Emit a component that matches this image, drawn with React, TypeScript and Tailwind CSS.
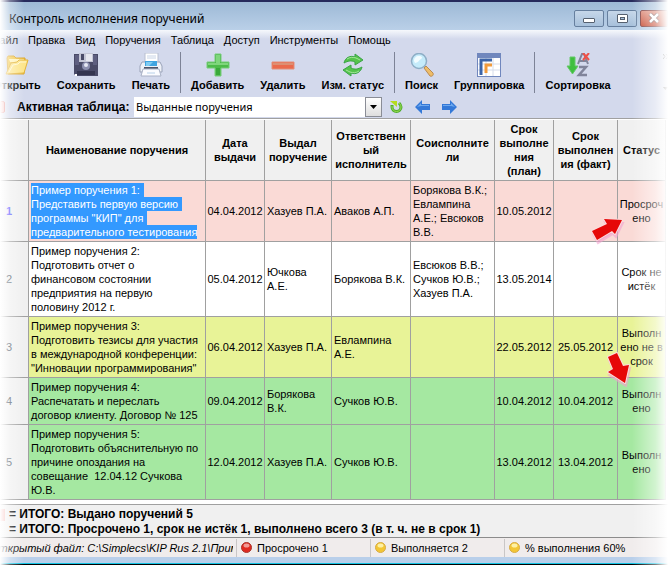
import React from 'react';

interface Task {
  id: number;
  name: string;
  issued: string;
  author: string;
  owner: string;
  helpers: string;
  plan: string;
  fact: string;
  status: string;
  rowClass: string;
}

const TASKS: Task[] = [
  {
    id: 1,
    name: 'Пример поручения 1:\nПредставить первую версию\nпрограммы "КИП" для\nпредварительного тестирования',
    issued: '04.04.2012',
    author: 'Хазуев П.А.',
    owner: 'Аваков А.П.',
    helpers: 'Борякова В.К.;\nЕвлампина\nА.Е.; Евсюков\nВ.В.',
    plan: '10.05.2012',
    fact: '',
    status: 'Просроч\nено',
    rowClass: 'h-[61px] bg-[#fadad6]',
  },
  {
    id: 2,
    name: 'Пример поручения 2:\nПодготовить отчет о\nфинансовом состоянии\nпредприятия на первую\nполовину 2012 г.',
    issued: '05.04.2012',
    author: 'Ючкова\nА.Е.',
    owner: 'Борякова В.К.',
    helpers: 'Евсюков В.В.;\nСучков Ю.В.;\nХазуев П.А.',
    plan: '13.05.2014',
    fact: '',
    status: 'Срок не\nистёк',
    rowClass: 'h-[75px] bg-white',
  },
  {
    id: 3,
    name: 'Пример поручения 3:\nПодготовить тезисы для участия\nв международной конференции:\n"Инновации программирования"',
    issued: '06.04.2012',
    author: 'Хазуев П.А.',
    owner: 'Евлампина\nА.Е.',
    helpers: '',
    plan: '22.05.2012',
    fact: '25.05.2012',
    status: 'Выполн\nено не в\nсрок',
    rowClass: 'h-[61px] bg-[#e8f397]',
  },
  {
    id: 4,
    name: 'Пример поручения 4:\nРаспечатать и переслать\nдоговор клиенту. Договор № 125',
    issued: '09.04.2012',
    author: 'Борякова\nВ.К.',
    owner: 'Сучков Ю.В.',
    helpers: '',
    plan: '10.04.2012',
    fact: '10.04.2012',
    status: 'Выполн\nено',
    rowClass: 'h-[47px] bg-[#a5e8a1]',
  },
  {
    id: 5,
    name: 'Пример поручения 5:\nПодготовить объяснительную по\nпричине опоздания на\nсовещание  12.04.12 Сучкова\nЮ.В.',
    issued: '12.04.2012',
    author: 'Хазуев П.А.',
    owner: 'Сучков Ю.В.',
    helpers: '',
    plan: '13.04.2012',
    fact: '13.04.2012',
    status: 'Выполн\nено',
    rowClass: 'h-[75px] bg-[#a5e8a1]',
  },
];

const COLUMNS = [
  { title: '', width: 'w-[29px]' },
  { title: 'Наименование поручения', width: '' },
  { title: 'Дата\nвыдачи', width: 'w-[59px]' },
  { title: 'Выдал\nпоручение', width: 'w-[67px]' },
  { title: 'Ответственн\nый\nисполнитель', width: 'w-[79px]' },
  { title: 'Соисполните\nли', width: 'w-[84px]' },
  { title: 'Срок\nвыполне\nния\n(план)', width: 'w-[59px]' },
  { title: 'Срок\nвыполнен\nия (факт)', width: 'w-[64px]' },
  { title: 'Статус', width: 'w-[48px]' },
];

const MENU = ['Файл', 'Правка', 'Вид', 'Поручения', 'Таблица', 'Доступ', 'Инструменты', 'Помощь'];

const FolderIcon = () => (
  <svg width="24" height="24" viewBox="0 0 24 24">
    <path d="M2 5l1-2h6l2 2h9v4l-1 12H3z" fill="#f3c94c" stroke="#dba62c" />
    <path d="M4 6h15v3H5z" fill="#fff3b8" />
    <path d="M1 21l5-11 6-1 2-2h9l-4 13z" fill="#fde58a" stroke="#e3b33a" />
    <path d="M4 19l4-7 5-1 2-2h6" fill="none" stroke="#fff6cf" />
  </svg>
);

const SaveIcon = () => (
  <svg width="24" height="24" viewBox="0 0 24 24">
    <path d="M0 1h24v22H2l-2-2z" fill="#4a4b68" />
    <path d="M1 2h4v10H1zM19 2h4v10h-4z" fill="#5e5f80" />
    <path d="M5 0h14v9H5z" fill="#c4c6d6" />
    <path d="M7 1h3v6H7z" fill="#4a4b68" />
    <path d="M12 1h6v7h-6z" fill="#e6e7ef" />
    <circle cx="12" cy="13" r="4" fill="#8d90b0" />
    <circle cx="12" cy="12" r="2" fill="#e6e8f4" />
    <path d="M3 18h18v4H3z" fill="#34354f" />
    <path d="M1 21h2v2H1z" fill="#fff" />
  </svg>
);

const PrintIcon = () => (
  <svg width="24" height="24" viewBox="0 0 24 24">
    <path d="M6 0h13v11H6z" fill="#fff" stroke="#b8bfd0" />
    <path d="M8 3h9M8 5h9" stroke="#c8d4e6" />
    <path d="M3 9h18l2 4v6H1v-6z" fill="#eef1f7" stroke="#9aa3b8" />
    <path d="M6 8h12v5H6z" fill="#3fa4e0" />
    <path d="M7 9h7l-4 4H7z" fill="#7fcbf2" />
    <path d="M5 14h14v2H5z" fill="#4c5468" />
    <path d="M4 16h16l2 7H2z" fill="#fbfcff" stroke="#aab2c6" />
    <path d="M8 20h8" stroke="#b7d0e8" />
  </svg>
);

const PlusIcon = () => (
  <svg width="24" height="24" viewBox="0 0 24 24">
    <path d="M9 1h6v8h8v6h-8v8H9v-8H1V9h8z" fill="#4dbb4a" stroke="#77cc78" />
    <path d="M10 2h4v8h8v2H2v-2h8z" fill="#7fd67c" />
    <path d="M10 15h4v7h-4z" fill="#39a93a" />
  </svg>
);

const MinusIcon = () => (
  <svg width="24" height="24" viewBox="0 0 24 24">
    <path d="M1 9h22v7H1z" fill="#ea6a4c" stroke="#e28f78" />
    <path d="M2 10h20v2H2z" fill="#dd8f72" />
  </svg>
);

const CycleIcon = () => (
  <svg width="24" height="24" viewBox="0 0 24 24" fill="#55c44c" stroke="#39a447">
    <path d="M3 10c1-5 6-8 11-6V1l8 6-8 5V9c-4-2-7-1-11 1z" />
    <path d="M21 14c-1 5-6 8-11 6v3l-8-6 8-5v3c4 2 7 1 11-1z" />
    <path d="M6 6c3-2 6-2 9-1l4 2M18 18c-3 2-6 2-9 1l-4-2" fill="none" stroke="#a4e69a" />
  </svg>
);

const SearchIcon = () => (
  <svg width="24" height="24" viewBox="0 0 24 24">
    <path d="M14 15l2-2 7 7c1 2-1 4-3 3z" fill="#eebd68" stroke="#b98a52" />
    <circle cx="9" cy="8" r="7.5" fill="#c5ebfa" stroke="#8eaec6" strokeWidth="1.5" />
    <path d="M4 8c0-3 2-5 5-5s4 2 2 3-3 4-6 4z" fill="#f2fcff" />
  </svg>
);

const GroupIcon = () => (
  <svg width="24" height="24" viewBox="0 0 24 24">
    <path d="M0 0h24v24H0z" fill="#7087bd" />
    <path d="M1 5h22v18H1z" fill="#fff" />
    <path d="M1 11h22M1 17h22M9 5v18M16 5v18" stroke="#d5dcea" />
    <path d="M4 22V7h11" fill="none" stroke="#3c64a8" strokeWidth="3" />
    <path d="M9 20v-8h6" fill="none" stroke="#f29b3c" strokeWidth="3" />
  </svg>
);

const SortIcon = () => (
  <svg width="24" height="24" viewBox="0 0 24 24">
    <path d="M4 4h5v9h3l-5.500 8L1 13h3z" fill="#3fbf3f" stroke="#64c968" />
    <path d="M12 11l4-10h2l4 10M14 8h6" fill="none" stroke="#80849a" strokeWidth="2" />
    <path d="M13 14h7l-7 8h8" fill="none" stroke="#80849a" strokeWidth="2.500" />
    <path d="M17 0l6 7M23 0l-6 7" stroke="#ee5148" strokeWidth="2" />
  </svg>
);

const TOOL_GROUPS = [
  [
    { label: 'Открыть', icon: <FolderIcon /> },
    { label: 'Сохранить', icon: <SaveIcon /> },
    { label: 'Печать', icon: <PrintIcon /> },
  ],
  [
    { label: 'Добавить', icon: <PlusIcon /> },
    { label: 'Удалить', icon: <MinusIcon /> },
    { label: 'Изм. статус', icon: <CycleIcon /> },
  ],
  [
    { label: 'Поиск', icon: <SearchIcon /> },
    { label: 'Группировка', icon: <GroupIcon /> },
  ],
  [{ label: 'Сортировка', icon: <SortIcon /> }],
];

const BlueArrow = ({ flip = false }: { flip?: boolean }) => (
  <svg width="15" height="14" viewBox="0 0 15 14" className={flip ? '-scale-x-100' : ''}>
    <path d="M0 7l7-7v4h8v6H7v4z" fill="#3479d8" />
    <path d="M2 7l4-4v2h8v1H6z" fill="#6ea9ee" />
  </svg>
);

const ARROW_UP = 'M2 14L17 7 14 2 32 3 25 17 22 14 7 23z';
const ARROW_DOWN = 'M2 6L11 2 17 15 23 14 19 32 2 21 7 18z';

const RedArrow = ({ path, className }: { path: string; className: string }) => (
  <svg width="36" height="36" viewBox="0 0 36 36" className={className}>
    <path d={path} transform="translate(1 3)" fill="#f08cc4" stroke="#f3a3cf" strokeWidth="2" opacity="0.6" />
    <path d={path} fill="#e60808" stroke="#fbdcdc" strokeWidth="2" strokeLinejoin="round" paintOrder="stroke" />
  </svg>
);

const Dot = ({ red = false }: { red?: boolean }) => (
  <svg width="11" height="11" viewBox="0 0 11 11" className="shrink-0">
    <circle cx="5.500" cy="5.500" r="5" fill={red ? '#e02a20' : '#f3c634'} stroke={red ? '#a8352c' : '#d6ab45'} />
    <ellipse cx="5.500" cy="3.500" rx="3" ry="2" fill={red ? '#f29a94' : '#fdf0a4'} />
  </svg>
);

const Cell = ({ children, center = false }: { children?: React.ReactNode; center?: boolean }) => (
  <td
    className={`whitespace-pre border-r border-b border-[#a0a0a0] p-0 ${center ? 'text-center' : 'pl-0.5 text-left'}`}
  >
    {children}
  </td>
);

const TitleBar = () => (
  <header className="flex h-[30px] items-center border-t-2 border-[#262a5c] bg-linear-to-b from-[#9db9d6] to-[#bad0e8]">
    <h1 className="flex-1 pl-[9px] pt-1.5 font-['Noto_Sans',sans-serif] text-[12px] leading-4">
      Контроль исполнения поручений
    </h1>
    <div className="flex gap-[3px] pt-1">
      <button
        aria-label="Свернуть"
        className="flex h-[17px] w-[30px] items-center justify-center rounded-xs border border-[#667f9e] bg-linear-to-b from-[#c6d7e9] to-[#a7c0db]"
      >
        <span className="mt-1 h-[5px] w-3 rounded-[1px] border border-[#55606f] bg-white" />
      </button>
      <button
        aria-label="Развернуть"
        className="flex h-[17px] w-[30px] items-center justify-center rounded-xs border border-[#667f9e] bg-linear-to-b from-[#c6d7e9] to-[#a7c0db]"
      >
        <span className="flex h-[9px] w-[11px] items-center justify-center rounded-[1px] border border-[#55606f] bg-white">
          <span className="h-[3px] w-[5px] border border-[#55606f] bg-[#a7c0db]" />
        </span>
      </button>
      <button
        aria-label="Закрыть"
        className="flex h-[17px] w-7 items-center justify-center rounded-l-xs border border-[#7c3b3b] bg-linear-to-b from-[#dd8d7c] to-[#c4452c]"
      >
        <svg width="12" height="10" viewBox="0 0 12 10">
          <path d="M2 1l8 8M10 1L2 9" stroke="#6c4a4a" strokeWidth="4" />
          <path d="M2 1l8 8M10 1L2 9" stroke="#fff" strokeWidth="2.500" />
        </svg>
      </button>
    </div>
  </header>
);

const Toolbar = () => (
  <div className="flex h-[46px] items-start">
    <div className="-ml-[15px] flex flex-1 items-start">
      {TOOL_GROUPS.map((group, i) => (
        <React.Fragment key={i}>
          {i > 0 && <span className="mx-0.5 mt-0.5 h-[41px] w-px shrink-0 bg-[#7d8396]" />}
          {group.map((tool) => (
            <button key={tool.label} className="flex shrink-0 flex-col items-center px-2 pt-[3px]">
              {tool.icon}
              <span className="whitespace-nowrap text-[11px] font-bold leading-4">{tool.label}</span>
            </button>
          ))}
        </React.Fragment>
      ))}
    </div>
    <button aria-label="Другие команды" className="flex flex-col items-center gap-7 pt-1">
      <svg width="5" height="5" viewBox="0 0 5 5">
        <path d="M0 0l2 2.500L0 5M3 0l2 2.500L3 5" fill="none" stroke="#333" />
      </svg>
      <svg width="5" height="3" viewBox="0 0 5 3">
        <path d="M0 0h5L2.500 3z" fill="#333" />
      </svg>
    </button>
  </div>
);

const ActiveTableBar = () => (
  <div className="flex h-[22px] items-center">
    <span className="h-3 w-[5px] rounded-r-xs border border-[#d85a55] bg-[#f3a29d]" />
    <label htmlFor="active-table" className="w-[129px] shrink-0 pl-3 text-[12px] font-bold leading-4">
      Активная таблица:
    </label>
    <div className="relative w-[248px]">
      <select
        id="active-table"
        className="block h-5 w-full appearance-none bg-white pl-0.5 font-['Noto_Sans',sans-serif] text-[11px] leading-5"
      >
        <option>Выданные поручения</option>
      </select>
      <span className="pointer-events-none absolute top-0 right-0 flex h-5 w-[17px] items-center justify-center border border-[#8a8d96] bg-linear-to-b from-white to-[#dedede]">
        <svg width="7" height="4" viewBox="0 0 7 4">
          <path d="M0 0h7L3.500 4z" />
        </svg>
      </span>
    </div>
    <div className="flex items-center gap-3 pl-2">
      <button aria-label="Обновить">
        <svg width="13" height="13" viewBox="0 0 13 13" className="block">
          <path d="M2 4v2a4.500 4.500 0 0 0 9 0c0-2-1-3-2-4" fill="none" stroke="#4fae2c" strokeWidth="3" />
          <path d="M2 5v1a4.500 4.500 0 0 0 9 0c0-2-1-3-2-4" fill="none" stroke="#9fdd55" />
          <path d="M0 0h7v6z" fill="#b4dc1e" />
        </svg>
      </button>
      <button aria-label="Назад">
        <BlueArrow />
      </button>
      <button aria-label="Вперёд">
        <BlueArrow flip />
      </button>
    </div>
  </div>
);

const TaskTable = () => (
  <div className="border-t border-[#a0a0a0] bg-white pt-px pr-0.5">
    <table className="w-full table-fixed border-separate border-spacing-0 text-[11px] leading-[14px]">
      <colgroup>
        {COLUMNS.map((c, i) => (
          <col key={i} className={c.width} />
        ))}
      </colgroup>
      <thead>
        <tr className="h-[61px] bg-[#f0f0f0]">
          {COLUMNS.map((c, i) => (
            <th key={i} className="whitespace-pre border-r border-b border-[#a0a0a0] p-0 text-center font-bold">
              {c.title}
            </th>
          ))}
        </tr>
      </thead>
      <tbody>
        {TASKS.map((t) => (
          <tr key={t.id} className={t.rowClass}>
            <th
              className={`border-r border-b border-[#a0a0a0] bg-[#f0f0f0] p-0 pr-4 text-right ${
                t.id === 1 ? 'font-bold text-[#5a50ff]' : 'font-normal text-[#4c5560]'
              }`}
            >
              {t.id}
            </th>
            <Cell>
              {t.id === 1
                ? t.name.split('\n').map((line) => (
                    <span key={line} className="block w-fit bg-[#3399ff] pr-1 text-white last:pr-0">
                      {line}
                    </span>
                  ))
                : t.name}
            </Cell>
            <Cell center>{t.issued}</Cell>
            <Cell>{t.author}</Cell>
            <Cell>{t.owner}</Cell>
            <Cell>{t.helpers}</Cell>
            <Cell center>{t.plan}</Cell>
            <Cell center>{t.fact}</Cell>
            <Cell center>
              <div className="relative">
                {t.status}
                {t.id === 1 && <RedArrow path={ARROW_UP} className="absolute top-5 -left-7" />}
                {t.id === 4 && <RedArrow path={ARROW_DOWN} className="absolute -top-9 -left-3" />}
              </div>
            </Cell>
          </tr>
        ))}
      </tbody>
    </table>
  </div>
);

const StatusBar = () => (
  <footer className="flex h-5 items-center border-t border-[#8c8c8c] bg-[#f0ecec] text-[11px] leading-4">
    <div className="flex h-[18px] w-[237px] shrink-0 items-center overflow-hidden border-r border-[#c9c6c6]">
      <span className="-ml-2.5 w-[243px] overflow-hidden whitespace-nowrap italic">
        Открытый файл: C:\Simplecs\KIP Rus 2.1\Прим
      </span>
    </div>
    <div className="flex h-[18px] w-[134px] shrink-0 items-center gap-[5px] border-r border-[#c9c6c6] pl-1">
      <Dot red />
      Просрочено 1
    </div>
    <div className="flex h-[18px] w-[134px] shrink-0 items-center gap-[5px] border-r border-[#c9c6c6] pl-1">
      <Dot />
      Выполняется 2
    </div>
    <div className="flex h-[18px] flex-1 items-center gap-[5px] pl-1">
      <Dot />% выполнения 60%
    </div>
  </footer>
);

export default function App() {
  return (
    <div className="relative overflow-hidden bg-white font-['Liberation_Sans',Arial,sans-serif] text-black">
      <TitleBar />
      <div className="bg-[linear-gradient(#f6f8fc,#d3d9ec_9px)]">
        <nav className="-ml-[9px] flex h-5 items-center gap-[10px] text-[11px] leading-4">
          {MENU.map((m) => (
            <button key={m}>{m}</button>
          ))}
        </nav>
        <Toolbar />
        <ActiveTableBar />
      </div>
      <TaskTable />
      <div className="mt-1 border-t border-[#a0a0a0] bg-[#f0f0f0] text-[12px] font-bold leading-[15px]">
        <div className="flex items-center gap-1 pt-0.5">
          <span className="h-3 w-[5px] bg-[#f3a29d]" />
          <p>= ИТОГО: Выдано поручений 5</p>
        </div>
        <p className="pl-[9px]">= ИТОГО: Просрочено 1, срок не истёк 1, выполнено всего 3 (в т. ч. не в срок 1)</p>
      </div>
      <StatusBar />
      <div className="h-2 border-b border-black bg-[#b9cfea]">
        <div className="h-full border-b border-[#12c4e4]" />
      </div>
      {/* soft fade on both edges of the window */}
      <div className="pointer-events-none absolute inset-y-0 left-0 w-6 bg-linear-to-r from-white via-white/40 via-40% to-transparent" />
      <div className="pointer-events-none absolute inset-y-0 right-0 w-9 bg-linear-to-l from-white via-white/50 via-35% to-transparent" />
    </div>
  );
}
